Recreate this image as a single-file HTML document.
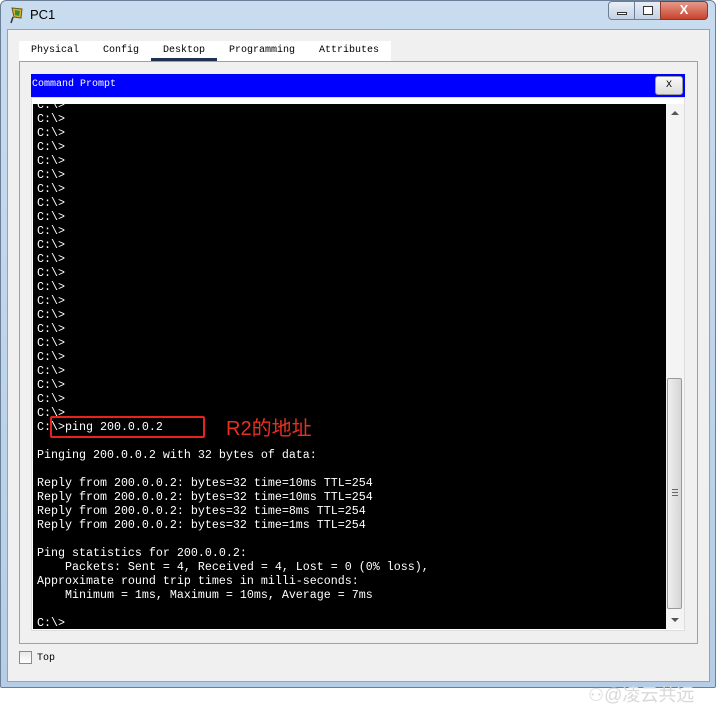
<!DOCTYPE html>
<html><head><meta charset="utf-8"><style>
*{margin:0;padding:0;box-sizing:border-box}
body{width:716px;height:719px;background:#fff;position:relative;overflow:hidden;font-family:"Liberation Sans",sans-serif}
.frame{position:absolute;left:0;top:0;width:716px;height:688px;background:linear-gradient(#c9dcef,#b5cde6);border:1px solid #6b7f99;border-radius:6px 6px 2px 2px}
.client{position:absolute;left:7px;top:29px;width:703px;height:653px;background:#f0f0f0;border:1px solid #8ea3bd}
.title{position:absolute;left:30px;top:7px;font-size:13px;color:#000}
.btn{position:absolute;top:1px;height:19px;border:1px solid #6d7f96;background:linear-gradient(#e8eef6,#c4d2e3)}
.mono{font-family:"Liberation Mono",monospace}
.tabs{position:absolute;left:19px;top:41px;width:372px;height:20px;background:#fff}
.tab{position:absolute;top:4px;font-size:10px}
.panel{position:absolute;left:19px;top:61px;width:679px;height:583px;border:1px solid #a0a0a0;background:#f0f0f0}
.hdr{position:absolute;left:31px;top:74px;width:654px;height:23px;background:#0000ff;color:#fff;font-size:10px;line-height:22px;padding-left:1px}
.term{position:absolute;left:33px;top:104px;width:633px;height:525px;background:#000;overflow:hidden}
pre{position:absolute;left:4px;top:-20px;color:#fff;font-size:11.67px;line-height:14px;font-family:"Liberation Mono",monospace}
.sb{position:absolute;left:666px;top:104px;width:18px;height:525px;background:#f4f4f4}
.thumb{position:absolute;left:1px;top:274px;width:15px;height:231px;border:1px solid #9a9a9a;border-radius:2px;background:linear-gradient(90deg,#eee,#d6d6d6)}
</style></head><body>
<div class="frame"></div>
<svg style="position:absolute;left:9px;top:6px" width="16" height="18"><path d="M3 2 L13 3 L12 12 L5 11Z" fill="#d9b030" stroke="#5a6020"/><path d="M6 4 L11 5 L10 10 L6 9Z" fill="#3a8a30"/><path d="M4 11 L2 17" stroke="#333" stroke-width="1.5"/></svg>
<div class="title">PC1</div>
<div class="btn" style="left:608px;width:27px;border-radius:4px 0 0 4px"><div style="position:absolute;left:8px;top:10px;width:10px;height:3px;border:1px solid #333;background:#fff"></div></div>
<div class="btn" style="left:634px;width:27px"><div style="position:absolute;left:8px;top:4px;width:10px;height:9px;border:1px solid #333;background:#fff"></div></div>
<div class="btn" style="left:660px;width:48px;background:linear-gradient(#e49a8a,#c8432d);border-color:#8a3a2a;border-radius:0 4px 4px 0;color:#fff;font-weight:bold;text-align:center;font-size:13px;line-height:16px">X</div>
<div class="client"></div>
<div class="tabs mono">
<span class="tab" style="left:12px">Physical</span>
<span class="tab" style="left:84px">Config</span>
<span class="tab" style="left:144px">Desktop</span>
<span class="tab" style="left:210px">Programming</span>
<span class="tab" style="left:300px">Attributes</span>
<div style="position:absolute;left:132px;top:17px;width:66px;height:4px;background:#1e3250"></div>
</div>
<div class="panel"></div>
<div class="hdr mono">Command Prompt<div style="position:absolute;right:2px;top:2px;width:28px;height:19px;background:linear-gradient(#fafafa,#dcdcdc);border:1px solid #999;border-radius:3px;color:#000;text-align:center;line-height:17px">X</div></div>
<div style="position:absolute;left:31px;top:97px;width:654px;height:534px;background:#fff;border:1px solid #ddd"></div>
<div class="term"><pre>C:\&gt;
C:\&gt;
C:\&gt;
C:\&gt;
C:\&gt;
C:\&gt;
C:\&gt;
C:\&gt;
C:\&gt;
C:\&gt;
C:\&gt;
C:\&gt;
C:\&gt;
C:\&gt;
C:\&gt;
C:\&gt;
C:\&gt;
C:\&gt;
C:\&gt;
C:\&gt;
C:\&gt;
C:\&gt;
C:\&gt;
C:\&gt;
C:\&gt;ping 200.0.0.2

Pinging 200.0.0.2 with 32 bytes of data:

Reply from 200.0.0.2: bytes=32 time=10ms TTL=254
Reply from 200.0.0.2: bytes=32 time=10ms TTL=254
Reply from 200.0.0.2: bytes=32 time=8ms TTL=254
Reply from 200.0.0.2: bytes=32 time=1ms TTL=254

Ping statistics for 200.0.0.2:
    Packets: Sent = 4, Received = 4, Lost = 0 (0% loss),
Approximate round trip times in milli-seconds:
    Minimum = 1ms, Maximum = 10ms, Average = 7ms

C:\&gt;</pre></div>
<div class="sb"><div style="position:absolute;left:5px;top:7px;border:4px solid transparent;border-bottom:4px solid #555;border-top:0"></div><div class="thumb"><div style="position:absolute;left:4px;top:110px;width:6px;height:7px;border-top:1px solid #666;border-bottom:1px solid #666"><div style="margin-top:2px;border-top:1px solid #666"></div></div></div><div style="position:absolute;left:5px;top:514px;border:4px solid transparent;border-top:4px solid #555;border-bottom:0"></div></div>
<div style="position:absolute;left:50px;top:416px;width:155px;height:22px;border:2px solid #e8231b;border-radius:2px"></div>
<div style="position:absolute;left:226px;top:412px;color:#e8301f;font-size:20px;font-family:'Liberation Sans','Noto Sans CJK SC',sans-serif">R2的地址</div>
<div style="position:absolute;left:19px;top:651px;width:13px;height:13px;border:1px solid #8a8a8a;background:linear-gradient(#e8e8e8,#fff)"></div>
<div class="mono" style="position:absolute;left:37px;top:653px;font-size:10px">Top</div>
<div style="position:absolute;left:588px;top:681px;color:#d8d8d8;font-size:18px;font-family:'Liberation Sans','Noto Sans CJK SC',sans-serif">⚇@凌云共远</div>
</body></html>
